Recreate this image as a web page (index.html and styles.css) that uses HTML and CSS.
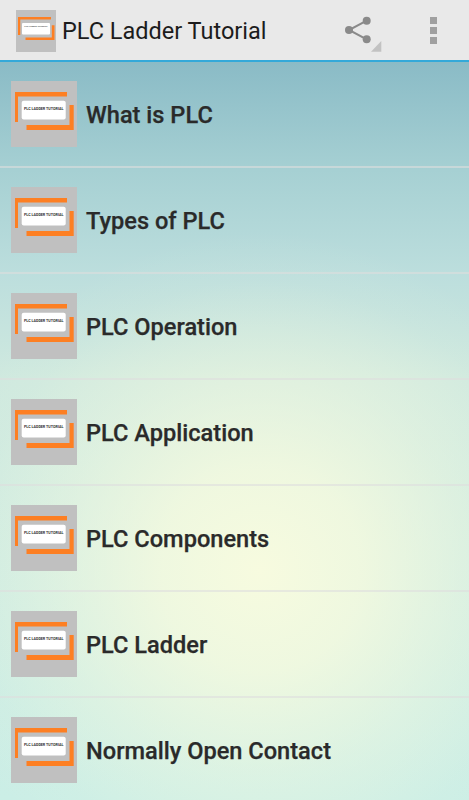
FILE: index.html
```html
<!DOCTYPE html>
<html lang="en">
<head>
<meta charset="utf-8">
<title>PLC Ladder Tutorial</title>
<link rel="stylesheet" href="styles.css">
</head>
<body>
<svg class="defs" width="0" height="0" aria-hidden="true">
  <symbol id="logo" viewBox="0 0 66 66">
    <rect width="66" height="66" fill="#c0c0c0"/>
    <path d="M4 11H56V15.5H7V41H4Z" fill="#fd7f23"/>
    <path d="M58.5 24H62.7V49H15.5V44H58.5Z" fill="#fd7f23"/>
    <rect x="10.7" y="19.7" width="44" height="18.8" rx="2" fill="#fff"/>
  </symbol>
</svg>
<header class="bar">
  <svg class="bar-logo" width="40" height="42" viewBox="0 0 40 42">
    <rect width="40" height="42" fill="#c0c0c0"/>
    <path d="M2 7H35V9.5H4.3V25H2Z" fill="#fd7f23"/>
    <path d="M35.8 15.3H38.5V30H9.5V27.5H35.8Z" fill="#fd7f23"/>
    <rect x="6" y="13" width="28" height="11.5" rx="1" fill="#fff"/>
    <text x="20" y="17.4" text-anchor="middle" class="logo-text-small">PLC LADDER TUTORIAL</text>
  </svg>
  <h1 class="title">PLC Ladder Tutorial</h1>
  <button class="share" aria-label="Share">
    <svg width="40" height="42" viewBox="0 0 40 42">
      <path d="M24.7 7.7 7 17 24.7 26.3" fill="none" stroke="#8a8a8a" stroke-width="2"/>
      <circle cx="24.7" cy="7.7" r="4" fill="#8a8a8a"/>
      <circle cx="7" cy="17" r="4" fill="#8a8a8a"/>
      <circle cx="24.7" cy="26.3" r="4" fill="#8a8a8a"/>
      <path d="M29 38.7H39.3V28Z" fill="#c2c2c2"/>
    </svg>
  </button>
  <div class="overflow" aria-label="More"><i></i><i></i><i></i></div>
</header>
<main class="list">
  <a class="row"><svg class="row-logo" width="66" height="66"><use href="#logo"/><text x="32.7" y="28.8" text-anchor="middle" class="logo-text">PLC LADDER TUTORIAL</text></svg><span class="label">What is PLC</span></a>
  <a class="row"><svg class="row-logo" width="66" height="66"><use href="#logo"/><text x="32.7" y="28.8" text-anchor="middle" class="logo-text">PLC LADDER TUTORIAL</text></svg><span class="label">Types of PLC</span></a>
  <a class="row"><svg class="row-logo" width="66" height="66"><use href="#logo"/><text x="32.7" y="28.8" text-anchor="middle" class="logo-text">PLC LADDER TUTORIAL</text></svg><span class="label">PLC Operation</span></a>
  <a class="row"><svg class="row-logo" width="66" height="66"><use href="#logo"/><text x="32.7" y="28.8" text-anchor="middle" class="logo-text">PLC LADDER TUTORIAL</text></svg><span class="label">PLC Application</span></a>
  <a class="row"><svg class="row-logo" width="66" height="66"><use href="#logo"/><text x="32.7" y="28.8" text-anchor="middle" class="logo-text">PLC LADDER TUTORIAL</text></svg><span class="label">PLC Components</span></a>
  <a class="row"><svg class="row-logo" width="66" height="66"><use href="#logo"/><text x="32.7" y="28.8" text-anchor="middle" class="logo-text">PLC LADDER TUTORIAL</text></svg><span class="label">PLC Ladder</span></a>
  <a class="row"><svg class="row-logo" width="66" height="66"><use href="#logo"/><text x="32.7" y="28.8" text-anchor="middle" class="logo-text">PLC LADDER TUTORIAL</text></svg><span class="label">Normally Open Contact</span></a>
</main>
</body>
</html>
```
FILE: styles.css
```css
* { box-sizing: border-box; }
html, body { margin: 0; height: 800px; overflow: hidden; }
body {
  font-family: Roboto, "Liberation Sans", sans-serif;
  display: flex;
  flex-direction: column;
  background: #fff;
}
.defs { position: absolute; }
.logo-text {
  font-family: Roboto, "Liberation Sans", sans-serif;
  font-size: 3.7px;
  font-weight: 700;
  fill: #333;
}
.logo-text-small {
  font-family: Roboto, "Liberation Sans", sans-serif;
  font-size: 2.2px;
  font-weight: 700;
  fill: #555;
}
.bar {
  height: 62px;
  flex: none;
  display: flex;
  align-items: center;
  background: #e9e9e9;
  border-bottom: 2px solid #33a9d9;
  padding-left: 16px;
}
.bar-logo { flex: none; margin-top: 2px; }
.title {
  margin: 2px 0 0 6px;
  font-size: 23.5px;
  font-weight: 400;
  color: #1c1c1c;
  flex: 1;
  white-space: nowrap;
}
.share {
  border: 0;
  padding: 0;
  background: none;
  width: 40px;
  height: 42px;
  margin-right: 48px;
  margin-top: 8px;
}
.share svg { display: block; }
.overflow {
  display: flex;
  flex-direction: column;
  gap: 3px;
  margin-right: 32px;
}
.overflow i { display: block; width: 7px; height: 7px; background: #a0a0a0; }
.list {
  flex: 1;
  overflow: hidden;
  background:
    radial-gradient(circle 340px at 260px 508px, rgba(247,251,223,1) 0%, rgba(247,251,223,.8) 30%, rgba(247,251,223,.38) 60%, rgba(247,251,223,.08) 85%, rgba(247,251,223,0) 100%),
    linear-gradient(180deg, #8abbc6 0, #a6d0d3 108px, #bcdedd 211px, #cfe9df 317px, #cbeee6 738px);
}
.row {
  height: 106px;
  display: flex;
  align-items: center;
  gap: 9px;
  padding-left: 11px;
  border-bottom: 2px solid rgba(222,222,222,.6);
  color: #2a2a2a;
  font-size: 23.6px;
  font-weight: 500;
  -webkit-text-stroke: .25px #2a2a2a;
}
.row-logo { flex: none; }
.label { padding-top: 2px; }
```
